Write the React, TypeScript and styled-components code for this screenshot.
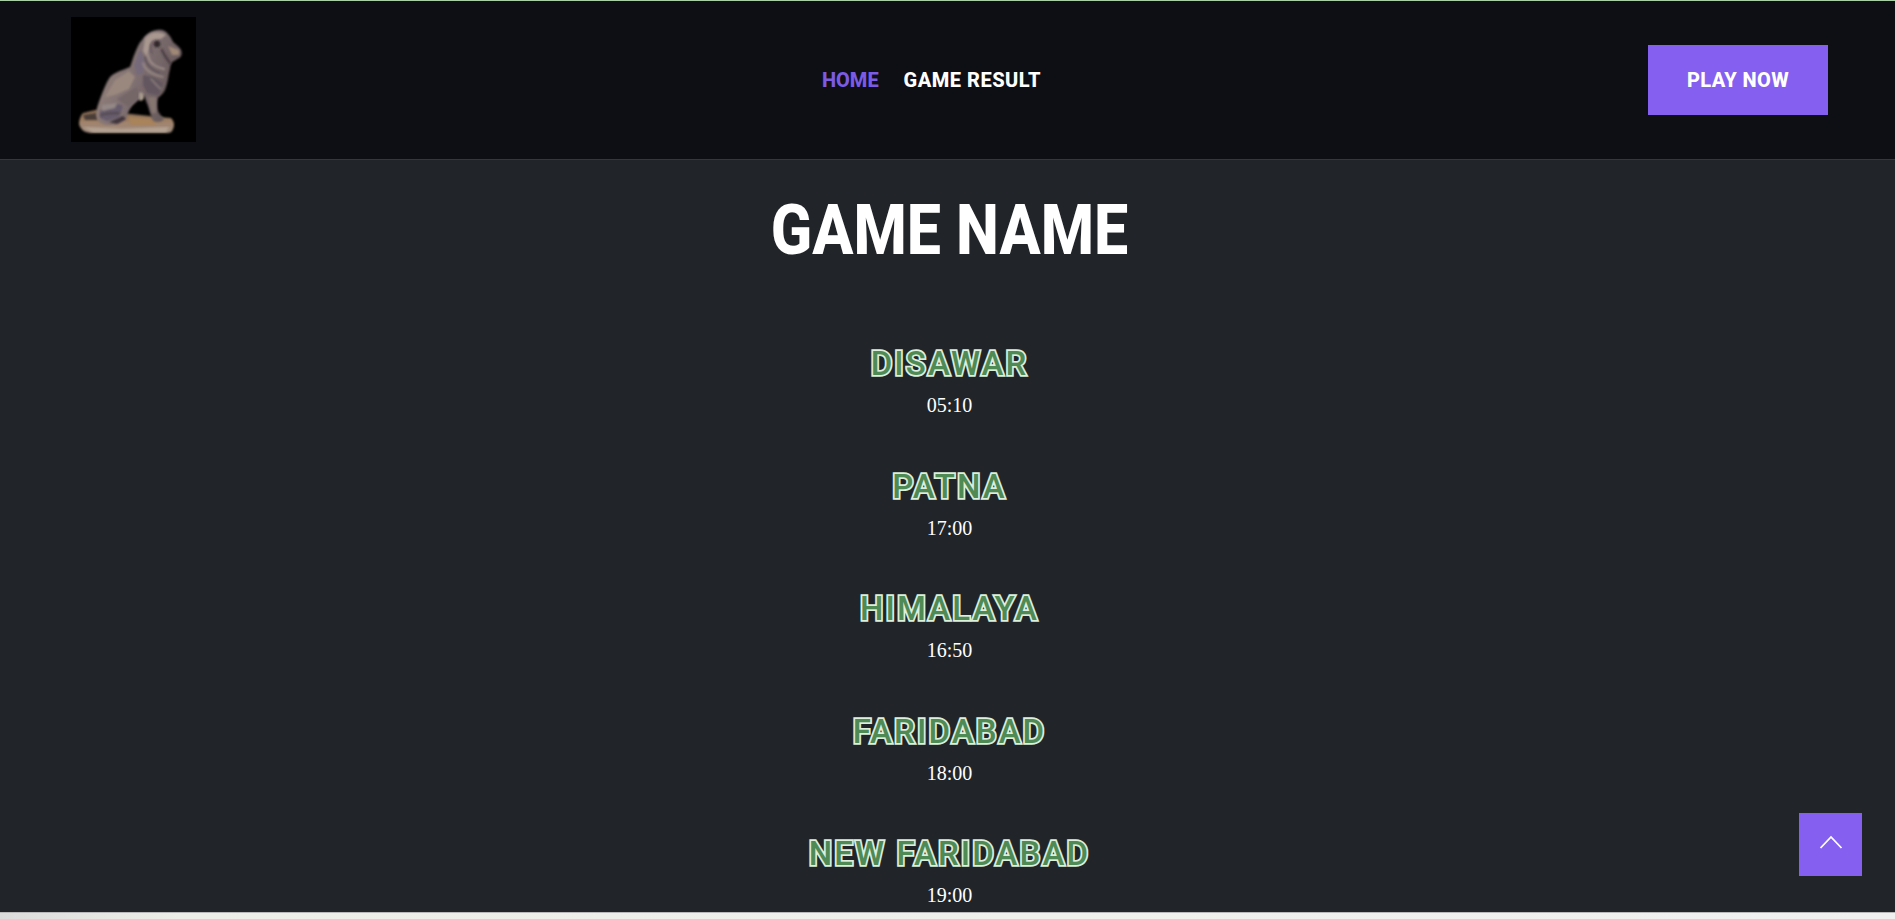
import React from 'react'
import styled, { createGlobalStyle } from 'styled-components'

const GlobalStyle = createGlobalStyle`
  html, body {
    margin: 0;
    padding: 0;
    height: 100%;
    overflow: hidden;
    background: #212529;
  }
  a {
    text-decoration: none;
  }
`

const headingFont = `Roboto, "Liberation Sans", sans-serif`

const Page = styled.div`
  position: relative;
  display: flex;
  flex-direction: column;
  height: 100vh;
  overflow: hidden;
  background: #212529;
  border-top: 1px solid #a9cfa6;
  box-sizing: border-box;
`

const Header = styled.header`
  flex: none;
  display: grid;
  grid-template-columns: 1fr auto 1fr;
  align-items: center;
  height: 158px;
  padding: 0 67px 0 71px;
  background: #0d0f14;
  border-bottom: 1px solid #34383d;
`

const LogoBox = styled.div`
  align-self: start;
  width: 125px;
  height: 125px;
  margin-top: 16px;
  background: #000;
`

const Nav = styled.nav`
  display: flex;
  gap: 25px;
  margin-right: 36px;
`

const NavLink = styled.a<{ $active?: boolean }>`
  font-family: ${headingFont};
  font-weight: 800;
  font-size: 20px;
  letter-spacing: ${props => (props.$active ? '0' : '0.5px')};
  text-transform: uppercase;
  color: ${props => (props.$active ? '#7b5be6' : '#fff')};
`

const PlayButton = styled.a`
  justify-self: end;
  display: flex;
  align-items: center;
  justify-content: center;
  width: 180px;
  height: 70px;
  background: #8560f0;
  color: #fff;
  font-family: ${headingFont};
  font-weight: 800;
  font-size: 20px;
  letter-spacing: 0.4px;
`

const Main = styled.main`
  flex: 1;
  min-height: 0;
  overflow: hidden;
  display: flex;
  flex-direction: column;
  align-items: center;
  padding-left: 4px;
`

const Title = styled.h1`
  margin: 31px 0 75px;
  font-family: ${headingFont};
  font-weight: 800;
  font-size: 70px;
  line-height: 78px;
  color: #fff;
  transform: scaleX(0.87);
`

const GameList = styled.div`
  display: flex;
  flex-direction: column;
  align-items: center;
  gap: 45.5px;
`

const Game = styled.div`
  display: flex;
  flex-direction: column;
  align-items: center;
  gap: 5px;
`

const GameName = styled.h2`
  margin: 0;
  font-family: ${headingFont};
  font-weight: 500;
  font-size: 33px;
  line-height: 40px;
  letter-spacing: 2.1px;
  color: #4f8a55;
  -webkit-text-stroke: 3.6px #dcefdd;
  paint-order: stroke fill;
  text-transform: uppercase;
`

const GameTime = styled.div`
  font-family: "Liberation Serif", serif;
  font-size: 20px;
  line-height: 32px;
  color: #fff;
`

const BottomStrip = styled.div`
  flex: none;
  height: 6px;
  background: linear-gradient(90deg, #dcdcdc 0, #eeeee8 180px, #f0f0f0 100%);
  border-top: 1px solid #b9b9b9;
`

const ToTop = styled.a`
  position: absolute;
  right: 33px;
  bottom: 43px;
  display: flex;
  align-items: center;
  justify-content: center;
  width: 63px;
  height: 63px;
  background: #8560f0;
  svg {
    margin-bottom: 6px;
  }
`

const Lion = () => (
  <svg width="125" height="125" viewBox="0 0 125 125">
    <defs>
      <filter id="soft" x="-10%" y="-10%" width="120%" height="120%">
        <feGaussianBlur stdDeviation="0.8" />
      </filter>
      <filter id="fur" x="-20%" y="-20%" width="140%" height="140%">
        <feGaussianBlur stdDeviation="1.3" />
      </filter>
      <filter id="strand" x="-20%" y="-20%" width="140%" height="140%">
        <feGaussianBlur stdDeviation="0.8" />
      </filter>
      <linearGradient id="coat" x1="0" y1="0" x2="1" y2="0.4">
        <stop offset="0" stopColor="#9a887e" />
        <stop offset="0.6" stopColor="#7d6e70" />
        <stop offset="1" stopColor="#675a5c" />
      </linearGradient>
      <linearGradient id="plinth" x1="0" y1="0" x2="0" y2="1">
        <stop offset="0" stopColor="#84664c" />
        <stop offset="0.5" stopColor="#a08268" />
        <stop offset="1" stopColor="#a08f84" />
      </linearGradient>
    </defs>
    {/* plinth */}
    <path
      filter="url(#soft)"
      fill="url(#plinth)"
      d="M8 107 C8 102 10 98 12 96 L24 93 L60 97 L88 100 L100 101 C103 104 104 108 102 112 C101 115 99 116 96 116 L22 116 C15 116 10 114 8 107 Z"
    />
    <path filter="url(#fur)" fill="#a9835a" d="M58 100 L86 103 L84 108 L60 108 Z" />
    <path filter="url(#fur)" fill="#4a3c38" d="M12 98 L26 96 L27 103 L14 103 Z" />
    <path filter="url(#fur)" fill="#b5a292" d="M12 110 L50 112 L98 110 L95 115 L22 115 Z" />
    {/* body */}
    <path
      filter="url(#soft)"
      fill="url(#coat)"
      d="M86 13 C91 12 95 14 97 17 C100 20 101 23 102 25 C105 28 109 30 110 33 C112 37 110 41 106 42 C104 44 101 44 100 47 C99 50 99 53 98 56 C97 62 96 68 94 73 C92 77 89 79 87 81 C86 85 86 90 87 94 C88 97 91 99 93 102 C91 105 86 106 82 104 C79 98 78 90 75 84 C74 81 73 79 72 78 C70 82 66 84 62 88 C58 92 57 97 55 101 C52 105 46 108 38 108 C32 108 27 106 26 101 C24 96 26 90 29 82 C32 74 35 66 39 60 C44 55 52 53 59 50 C61 45 62 40 64 36 C66 31 68 26 71 23 C74 18 79 14 86 13 Z"
    />
    {/* mane and fur shading */}
    <g filter="url(#fur)">
      <path fill="#a89890" d="M74 21 C80 14 90 14 95 18 L90 22 L84 22 L79 28 L76 40 L72 34 Z" />
      <path fill="#766a7a" d="M63 48 L69 32 L74 44 L72 56 L66 58 Z" />
      <path fill="#63575e" d="M72 58 L82 60 L92 66 L88 78 L76 76 L72 68 Z" />
      <path fill="#9a887e" d="M34 80 L44 63 L58 54 L64 60 L58 72 L44 78 Z" />
      <path fill="#756668" d="M46 82 L66 70 L69 79 L58 90 Z" />
      <path fill="#665c6c" d="M29 94 C34 87 46 85 52 89 L48 100 L36 104 L29 101 Z" />
      <path fill="#948886" d="M31 88 L46 86 L44 91 L31 94 Z" />
      <path fill="#40353a" d="M38 105 L52 99 L55 102 L46 107 Z" />
      <path fill="#86766f" d="M77 80 L85 80 L85 96 L81 96 Z" />
      <path fill="#a08876" d="M97 29 L108 33 L108 38 L101 38 Z" />
    </g>
    <g filter="url(#strand)" fill="none" strokeLinecap="round">
      <path stroke="#a3948e" strokeWidth="1.8" d="M77 38 C78 46 84 50 93 52" />
      <path stroke="#463a40" strokeWidth="2.2" d="M91 33 C93 38 96 42 99 46" />
      <path stroke="#9c8e88" strokeWidth="1.6" d="M72 46 C74 54 82 58 92 60" />
      <path stroke="#5c5056" strokeWidth="1.6" d="M74 40 C75 48 80 52 88 56" />
      <path stroke="#93857f" strokeWidth="1.4" d="M80 62 C84 66 87 70 90 72" />
      <path stroke="#4d4248" strokeWidth="1.4" d="M30 98 C36 96 42 96 48 96" />
      <path stroke="#5f5155" strokeWidth="1.4" d="M82 24 C79 28 79 32 81 36" />
    </g>
    <circle cx="86" cy="27" r="3.2" fill="#30262a" filter="url(#strand)" />
    <path d="M68 76 C71 74 73 77 73 80 C73 83 70 85 68 83 Z" fill="#a89a8e" filter="url(#strand)" />
  </svg>
)

const games = [
  { name: 'Disawar', time: '05:10' },
  { name: 'Patna', time: '17:00' },
  { name: 'Himalaya', time: '16:50' },
  { name: 'Faridabad', time: '18:00' },
  { name: 'New Faridabad', time: '19:00' },
]

const App = () => {
  return (
    <Page>
      <GlobalStyle />
      <Header>
        <LogoBox>
          <Lion />
        </LogoBox>
        <Nav>
          <NavLink href="#" $active>Home</NavLink>
          <NavLink href="#">Game Result</NavLink>
        </Nav>
        <PlayButton href="#">PLAY NOW</PlayButton>
      </Header>
      <Main>
        <Title>GAME NAME</Title>
        <GameList>
          {games.map(game => (
            <Game key={game.name}>
              <GameName>{game.name}</GameName>
              <GameTime>{game.time}</GameTime>
            </Game>
          ))}
        </GameList>
      </Main>
      <BottomStrip />
      <ToTop href="#" aria-label="Back to top">
        <svg width="24" height="14" viewBox="0 0 24 14" fill="none">
          <path d="M1.5 13 L12 2 L22.5 13" stroke="#fff" strokeWidth="1.8" />
        </svg>
      </ToTop>
    </Page>
  )
}

export default App
